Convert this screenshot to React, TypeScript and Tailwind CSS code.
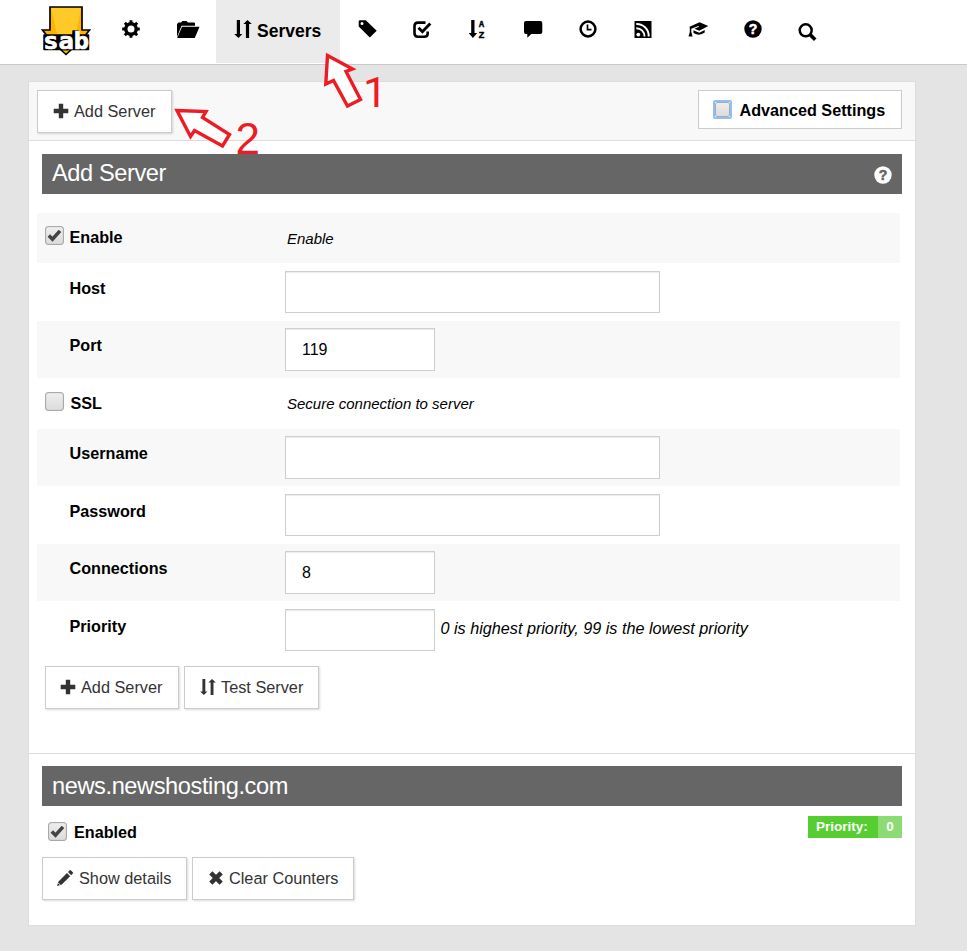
import type { ReactNode } from "react";

function Icon({ children, className = "" }: { children: ReactNode; className?: string }) {
  return (
    <svg viewBox="0 0 24 24" width="24" height="24" fill="currentColor" className={`shrink-0 ${className}`}>
      {children}
    </svg>
  );
}

function Logo() {
  return (
    <svg viewBox="0 0 52 52" width="52" height="52" className="ml-10 mt-1 shrink-0">
      <path d="M10 3H42V26H49.500L44 33H8L2.500 26H10Z" fill="#ffb300" stroke="#000" strokeWidth="1.700" />
      <path d="M11 4H41L36 30H17Z" fill="#ffca28" />
      <path d="M20.500 45.500H31.500L26 50.500Z" fill="#ffb300" stroke="#000" strokeWidth="1.500" />
      <path d="M4 31H33V27H38.500V31H48.500V45.500H4Z" fill="#000" stroke="#000" strokeWidth="1.500" strokeLinejoin="round" />
      <text
        x="3.300"
        y="44.500"
        textLength="45.800"
        lengthAdjust="spacingAndGlyphs"
        className="font-['DejaVu_Sans_Mono',monospace] text-[22.500px] font-bold"
        fill="#fff"
        stroke="#fff"
        strokeWidth=".7"
        strokeLinejoin="miter"
      >
        sab
      </text>
    </svg>
  );
}

const Gear = () => (
  <Icon>
    <circle cx="12" cy="12" r="5.200" fill="none" stroke="currentColor" strokeWidth="3.400" />
    <g stroke="currentColor" strokeWidth="2.900">
      <path d="M12 3.200V6.500M12 17.500V20.800M3.200 12H6.500M17.500 12H20.800M5.800 5.800L8 8M16 16L18.200 18.200M5.800 18.200L8 16M16 8L18.200 5.800" />
    </g>
  </Icon>
);
const Folder = () => (
  <Icon>
    <path d="M1 20V7L2.500 5.500H5L6.500 4H10.500L12 5.500H18Q19 5.500 19 6.500V8.700H5.500Z" />
    <path d="M6 9.800H23.500L18.800 21H1.200Z" />
  </Icon>
);
const Tag = () => (
  <Icon>
    <path fillRule="evenodd" d="M2.700 4.500Q2.700 3.200 4 3.200H9.800L20.700 13.700L13.800 20.500L2.700 9.500ZM6 4.900A1.500 1.500 0 1 0 6 7.900A1.500 1.500 0 1 0 6 4.900Z" />
  </Icon>
);
const Check = () => (
  <Icon className="-ml-px">
    <path d="M15.500 5.600H8Q4.500 5.600 4.500 9V16.200Q4.500 19.700 8 19.700H14.200Q17.700 19.700 17.700 16.500V14.500" fill="none" stroke="currentColor" strokeWidth="2.600" />
    <path d="M8.500 10.800L12.400 14.700L20.300 6.500" fill="none" stroke="currentColor" strokeWidth="2.900" />
  </Icon>
);
const SortAZ = () => (
  <Icon className="-ml-px">
    <path d="M6.200 3H9.500V16H12.200L7.900 21L3.600 16H6.200Z" />
    <g className="font-['Liberation_Sans',Arial,sans-serif] text-[8.500px] font-bold" stroke="currentColor" strokeWidth=".5">
      <text x="13.700" y="9.800" textLength="5.500" lengthAdjust="spacingAndGlyphs">A</text>
      <text x="13.700" y="20.800" textLength="5.500" lengthAdjust="spacingAndGlyphs">Z</text>
    </g>
  </Icon>
);
const Comment = () => (
  <Icon>
    <path d="M5 4H19.300Q21.300 4 21.300 6V15Q21.300 17 19.300 17H10.300L6.300 20.800V17H5Q3 17 3 15V6Q3 4 5 4Z" />
  </Icon>
);
const Clock = () => (
  <Icon>
    <circle cx="12" cy="12" r="7.400" fill="none" stroke="currentColor" strokeWidth="2.500" />
    <path d="M11.500 7.500V12.700H15.500" fill="none" stroke="currentColor" strokeWidth="1.700" />
  </Icon>
);
const Rss = () => (
  <Icon>
    <path d="M3.500 4H20.500V21H3.500Z" />
    <circle cx="7.300" cy="17.600" r="1.900" fill="#fff" />
    <path d="M5.300 11.200A8 8 0 0 1 13.500 19.500M5.300 7A12 12 0 0 1 17.700 19.500" fill="none" stroke="#fff" strokeWidth="1.900" />
  </Icon>
);
const Graduation = () => (
  <Icon>
    <path d="M3.500 9.800L13.500 5.300L22.300 9L13.300 13.700L8.500 11.700L13 9.700L12.500 9.100L5.300 11.800V15L6.500 19.500H2.500L3.800 15V11Z" />
    <path d="M7.400 13.200L13.300 15.800L18.700 13V15.600Q13.500 19.600 7.500 16Z" />
  </Icon>
);
function Question({ mark, className = "" }: { mark: string; className?: string }) {
  return (
    <Icon className={className}>
      <circle cx="12" cy="12" r="8.700" />
      <text x="12" y="17" textAnchor="middle" className="font-['Liberation_Sans',Arial,sans-serif] text-[14px] font-bold" fill={mark} stroke={mark} strokeWidth=".5">
        ?
      </text>
    </Icon>
  );
}
const Search = () => (
  <Icon className="-ml-px">
    <circle cx="10.700" cy="10.300" r="6" fill="none" stroke="currentColor" strokeWidth="2.500" />
    <path d="M15 14.600L20.200 19.800" stroke="currentColor" strokeWidth="3.600" />
  </Icon>
);

const UpDown = () => (
  <Icon className="-ml-px">
    <path d="M5.800 3H9V17H11.300L7.500 21L3.200 17H5.800ZM14.900 21H18.100V7H20.800L16.500 3L12.400 7H14.900Z" />
  </Icon>
);
const Plus = () => (
  <svg viewBox="0 0 16 16" width="16" height="16" className="shrink-0" fill="currentColor">
    <path d="M5.800 .7H10.200V5.800H15.300V10.200H10.200V15.300H5.800V10.200H.7V5.800H5.800Z" />
  </svg>
);
const Arrows = () => (
  <svg viewBox="2 2 20 20" width="18" height="18" className="-ml-px -mr-px shrink-0" fill="currentColor">
    <path d="M5.800 3H9V17H11.300L7.500 21L3.200 17H5.800ZM14.900 21H18.100V7H20.800L16.500 3L12.400 7H14.900Z" />
  </svg>
);
const Pencil = () => (
  <svg viewBox="0 0 18 18" width="18" height="18" className="-ml-px shrink-0" fill="currentColor">
    <path d="M1 17L2.500 12.500L11 4L14.200 7.200L5.500 15.700ZM12 3L13.800 1.200Q14.300 .7 14.800 1.200L17 3.400Q17.300 3.800 16.800 4.500L15.200 6.200Z" />
    <path d="M2.300 14L4.200 15.900" stroke="#fff" strokeWidth=".9" />
  </svg>
);
const Cross = () => (
  <svg viewBox="0 0 16 16" width="16" height="16" className="shrink-0" fill="none" stroke="currentColor" strokeWidth="4.500">
    <path d="M2.800 2.800L13.200 13.200M13.200 2.800L2.800 13.200" />
  </svg>
);

function NavItem({ children, className = "w-[55px]" }: { children: ReactNode; className?: string }) {
  return <a className={`flex shrink-0 justify-center pt-[17px] ${className}`}>{children}</a>;
}

function Button({ icon, label, className }: { icon: ReactNode; label: string; className: string }) {
  return (
    <button className={`flex h-[43px] items-center gap-[5px] whitespace-nowrap border border-[#ccc] bg-white pb-px text-[16.300px] text-[#333] shadow-[1px_1px_2px_rgba(0,0,0,.15)] ${className}`}>
      {icon}
      <span>{label}</span>
    </button>
  );
}

function Checkbox({ checked = false }: { checked?: boolean }) {
  return (
    <span className="flex size-[19px] shrink-0 items-center justify-center rounded-[3px] border border-[#aaa] bg-linear-to-b from-[#eee] to-[#dcdcdc] shadow-[inset_0_0_1px_#999]">
      {checked && (
        <svg viewBox="0 0 15 15" width="15" height="15">
          <path d="M1.800 7.500L5.500 11.200L13 2.800" fill="none" stroke="#444" strokeWidth="3.500" />
        </svg>
      )}
    </span>
  );
}

function Bar({ title, className, children }: { title: string; className: string; children?: ReactNode }) {
  return (
    <div className="ml-[13px] flex h-10 w-[860px] justify-between bg-[#666] pl-2.5 pr-[7px] text-white">
      <h2 className={`text-[23.600px] ${className}`}>{title}</h2>
      {children}
    </div>
  );
}

type RowProps = {
  label: string;
  height: string;
  shaded?: boolean;
  toggle?: "on" | "off";
  desc?: string;
  field?: string;
  value?: string;
  labelClass?: string;
};
function Row({ label, height, shaded, toggle, desc, field, value = "", labelClass = "pt-[15px]" }: RowProps) {
  return (
    <div className={`ml-2 flex w-[863px] ${height} ${shaded ? "bg-[#f8f8f8]" : ""}`}>
      <div className="flex w-[248px] shrink-0">
        <div className={`w-[32.500px] shrink-0 pl-2 ${toggle === "off" ? "pt-3.5" : "pt-[13px]"}`}>{toggle && <Checkbox checked={toggle === "on"} />}</div>
        <label className={`text-[16.200px] font-bold leading-5 text-black ${labelClass}`}>{label}</label>
      </div>
      {field && (
        <input readOnly value={value} className={`border border-[#cfcfc8] bg-white pl-4 text-[16px] text-black shadow-[inset_0_1px_1px_rgba(0,0,0,.08)] outline-none ${field}`} />
      )}
      {desc && (
        <span className={`italic leading-5 text-black ${field ? "ml-[5.500px] pt-[17px] text-[16.200px]" : "ml-[2px] pt-4 text-[15px]"}`}>{desc}</span>
      )}
    </div>
  );
}

function Annotations() {
  return (
    <svg className="pointer-events-none absolute left-0 top-0" width="400" height="180" viewBox="0 0 400 180">
      <g fill="#fff" stroke="#ed1c24" strokeWidth="3.400">
        <path d="M327.500 55.500L352.500 69L346 71.500L360.500 99.500L347.500 106L333.500 80.500L325.800 84Z" />
        <path d="M177 110.500L206 111.500L202.500 117.500L229.500 134.500L222.500 146L194.500 130.500L190.500 136.500Z" />
      </g>
      <g fill="#ed1c24">
        <text x="363" y="107" className="font-['Roboto',sans-serif] text-[43px]">1</text>
        <text x="235.500" y="154" className="font-['Liberation_Sans',Arial,sans-serif] text-[44px]">2</text>
      </g>
    </svg>
  );
}

export default function App() {
  return (
    <div className="relative h-[951px] w-[967px] overflow-hidden bg-[#e4e4e4] font-['Liberation_Sans',Arial,sans-serif] text-black">
      <nav className="flex h-[65px] border-b border-[#c8c8c8] bg-white">
        <Logo />
        <NavItem className="ml-[11px] w-[56px]"><Gear /></NavItem>
        <NavItem className="ml-px w-[56px]"><Folder /></NavItem>
        <a className="flex h-[63px] w-[124px] shrink-0 bg-[#ebebeb] pl-4 pt-[17px]">
          <UpDown />
          <span className="ml-[2px] mt-1 text-[17.500px] font-bold leading-5">Servers</span>
        </a>
        <NavItem><Tag /></NavItem>
        <NavItem><Check /></NavItem>
        <NavItem><SortAZ /></NavItem>
        <NavItem><Comment /></NavItem>
        <NavItem><Clock /></NavItem>
        <NavItem><Rss /></NavItem>
        <NavItem><Graduation /></NavItem>
        <NavItem><Question mark="#fff" /></NavItem>
        <NavItem className="mt-[3px] w-[55px]"><Search /></NavItem>
      </nav>

      <main className="ml-7 mt-4 h-[845px] w-[888px] border border-[#ddd] bg-white">
        <div className="flex h-[59px] justify-between border-b border-[#ddd] bg-[#f8f8f8] pl-2 pr-[13px] pt-2">
          <Button icon={<Plus />} label="Add Server" className="w-[135px] pl-[15px]" />
          <div className="flex h-[39px] w-[204px] items-center border border-[#ccc] bg-white pl-3.5">
            <span className="flex size-[19px] items-center justify-center rounded-[2px] border-2 border-[#8fc0f4] bg-white">
              <span className="size-[15px] shrink-0 rounded-[2px] border border-[#aaa] bg-linear-to-b from-[#eee] to-[#dcdcdc]" />
            </span>
            <span className="ml-[7.500px] mt-0.5 whitespace-nowrap text-[16.200px] font-bold">Advanced Settings</span>
          </div>
        </div>

        <section className="h-[613px] border-b border-[#ddd] pt-[13px]">
          <Bar title="Add Server" className="leading-[38px] tracking-[-0.4px]">
            <Question mark="#666" className="mt-[9px]" />
          </Bar>
          <div className="pt-[19px]">
            <Row label="Enable" height="h-[50px]" shaded toggle="on" desc="Enable" labelClass="pt-[14px]" />
            <Row label="Host" height="h-[58px]" field="mt-2 h-[42px] w-[375px]" />
            <Row label="Port" height="h-[57px]" shaded field="mt-[7px] h-[43px] w-[150px]" value="119" labelClass="pt-[14px]" />
            <Row label="SSL" height="h-[51px]" toggle="off" desc="Secure connection to server" labelClass="pl-px pt-[15px]" />
            <Row label="Username" height="h-[57px]" shaded field="mt-[7px] h-[43px] w-[375px]" labelClass="pt-[14px]" />
            <Row label="Password" height="h-[58px]" field="mt-2 h-[42px] w-[375px]" />
            <Row label="Connections" height="h-[57px]" shaded field="mt-[7px] h-[43px] w-[150px]" value="8" labelClass="pt-[14px]" />
            <Row label="Priority" height="h-[57px]" field="mt-2 h-[42px] w-[150px]" desc="0 is highest priority, 99 is the lowest priority" />
          </div>
          <div className="ml-4 mt-2 flex gap-[5px]">
            <Button icon={<Plus />} label="Add Server" className="w-[134px] pl-3.5" />
            <Button icon={<Arrows />} label="Test Server" className="w-[135px] pl-[15px]" />
          </div>
        </section>

        <section className="pt-3">
          <Bar title="news.newshosting.com" className="leading-[40px] tracking-[-0.4px]" />
          <div className="ml-[13px] flex h-[51px] w-[860px] justify-between">
            <div className="flex pl-1.5 pt-4">
              <Checkbox checked />
              <span className="ml-[7px] text-[16.200px] font-bold leading-5">Enabled</span>
            </div>
            <div className="mt-2.5 flex h-[22px] text-[13.500px] font-bold leading-[21px] text-white">
              <span className="w-[70px] bg-[#56cd30] pl-2">Priority:</span>
              <span className="w-6 bg-[#8ddb74] text-center">0</span>
            </div>
          </div>
          <div className="ml-[13px] flex gap-[5px]">
            <Button icon={<Pencil />} label="Show details" className="w-[145px] pl-3.5" />
            <Button icon={<Cross />} label="Clear Counters" className="w-[162px] pl-[15px]" />
          </div>
        </section>
      </main>
      <Annotations />
    </div>
  );
}
